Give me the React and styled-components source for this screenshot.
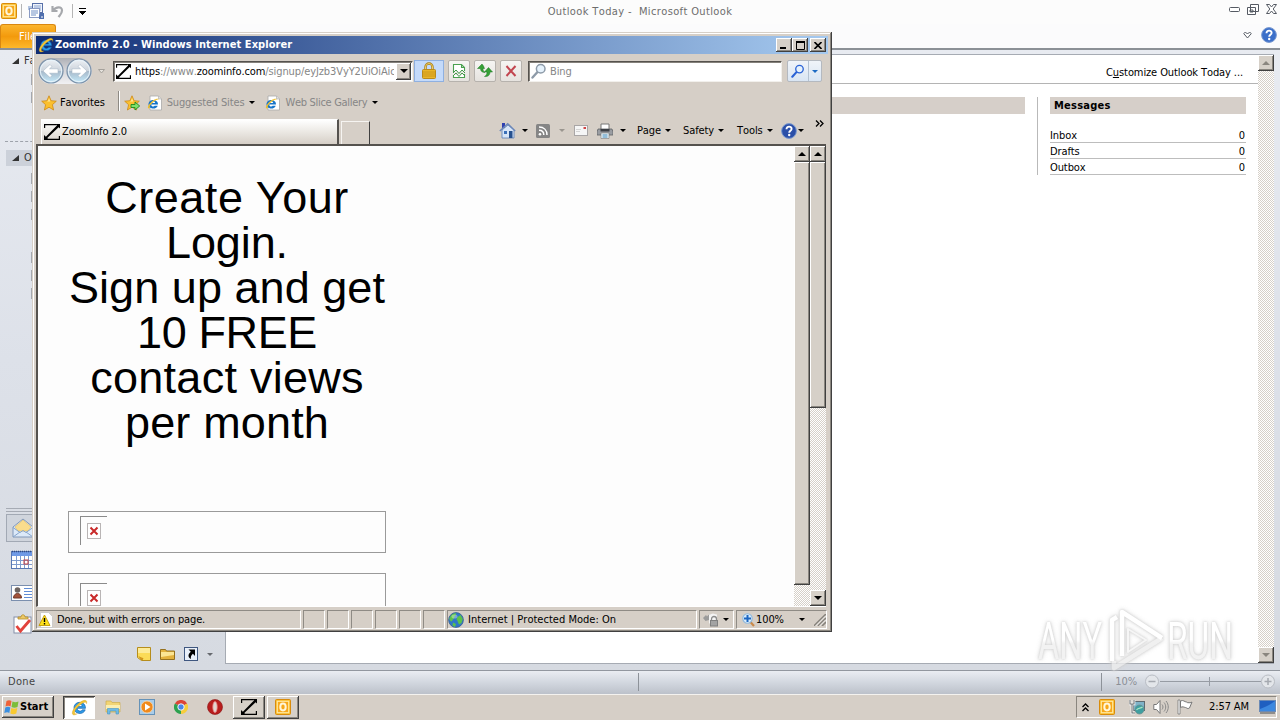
import styled, { createGlobalStyle, css } from "styled-components";

const GlobalStyle = createGlobalStyle`
  * {
    box-sizing: border-box;
  }
  body {
    margin: 0;
    overflow: hidden;
    font-family: "DejaVu Sans Condensed", "DejaVu Sans", Tahoma, sans-serif;
    font-size: 11px;
    color: #000;
    font-kerning: none;
  }
  svg {
    display: block;
    flex: none;
  }
`

const raised = css`
  background: #d6d0c8;
  box-shadow: inset -1px -1px #404040, inset 1px 1px #fff, inset -2px -2px #8a867f;
`
const hatch = css`
  background: repeating-conic-gradient(#d6d0c8 0 25%, #fff 0 50%) 0 0 / 2px 2px;
`

const Label = styled.span`
  white-space: pre;
  line-height: 14px;
  letter-spacing: ${props => props.$ls ?? -0.1}px;
  color: ${props => props.$color || "#000"};
  font-weight: ${props => props.$bold ? 700 : 400};
  margin-left: ${props => props.$ml || 0}px;
`

const Spacer = styled.div`
  flex: ${props => props.$w ? "none" : 1};
  width: ${props => props.$w || 0}px;
`

/* ---------- icons ---------- */

const Caret = ({ color = "#000", w = 6 }) => (
  <svg width={w} height={Math.ceil(w / 2)} viewBox="0 0 6 3">
    <path d="M0 0h6L3 3z" fill={color} />
  </svg>
)

const IeIcon = ({ size = 16 }) => (
  <svg width={size} height={size} viewBox="0 0 16 16">
    <path d="M13.6 8.8H5.8c.2 3 4 3.300 4.800 1.400h2.800C11.700 15.400 2.800 14.600 2.800 8.300 2.800 1.500 13.900 1.200 13.600 8.800zM5.900 7h4.700C10.300 4.200 6.300 4.200 5.900 7z" fill="#2f9be8" stroke="#0d5da8" strokeWidth=".6" />
    <path d="M14.600 4.500C15.800.6 12.500.3 8.500 3.100 3.800 6.400.2 12.200 1.500 14.300c.7 1.200 2.700.6 4.300-.4-3.800 1-3-2.900 1.200-7 3.500-3.400 7.700-5.600 7.600-2.400z" fill="#f3c637" stroke="#c99312" strokeWidth=".3" />
  </svg>
)

const IePage = () => (
  <svg width="16" height="16" viewBox="0 0 16 16">
    <path d="M3 1h8.500l3 3v11H3z" fill="#fff" stroke="#a9a9a9" strokeWidth=".8" />
    <path d="M11.500 1v3h3" fill="#ddd" stroke="#a9a9a9" strokeWidth=".6" />
    <path d="M11 9.500H4.200c.1 2.300 2.700 2.500 3.500 1.200h3C9.500 15 1.500 14.300 1.500 9.200 1.500 3.500 11.300 3.300 11 9.500zM4.300 7.900h3.900c-.3-2.200-3.600-2.200-3.900 0z" fill="#1674c9" />
    <path d="M11.500 5C12 3 9 3.500 6.500 5.200 3 7.500.3 11.500 1 13c.5.900 2 .3 3-.4-2.300.5-1.500-2 1.300-4.700C8 5.400 11.500 3.500 11.500 5z" fill="#edbf2f" />
  </svg>
)

const ZLogo = ({ size = 16 }) => (
  <svg width={size} height={size} viewBox="0 0 16 16">
    <path d="M0 0h12v1.300H1.200V4H0zM16 16H4v-1.300h10.800V12H16z" fill="#000" />
    <path d="M11.500 0H16v4.500l-1.400-1.300L3.300 14 5 16H0v-5l1.900 1.700L12.900 1.600z" fill="#000" />
  </svg>
)

const OutlookIcon = ({ size = 16 }) => (
  <svg width={size} height={size} viewBox="0 0 16 16">
    <rect x=".5" y=".5" width="15" height="15" rx="1" fill="#f9b91e" stroke="#d98b0a" />
    <rect x="2.300" y="2.300" width="11.400" height="11.400" fill="#f7a81a" stroke="#ffe7a0" strokeWidth="1.200" />
    <ellipse cx="8" cy="8" rx="2.700" ry="3.400" fill="none" stroke="#fff6d8" strokeWidth="2" />
  </svg>
)

const SendReceiveIcon = () => (
  <svg width="16" height="16" viewBox="0 0 16 16">
    <rect x="4.500" y=".5" width="10" height="9" fill="#eef3fb" stroke="#5870a8" />
    <path d="M6 3h7M6 5h7M6 7h7" stroke="#8ba3d0" />
    <rect x="1.500" y="5.500" width="10" height="9" fill="#fff" stroke="#8a9bc4" />
    <path d="M3 8h7M3 10h7M3 12h5M0 4h4M0 6h2" stroke="#6f8fc5" />
    <path d="M12 10h4v6h-5v-3z" fill="#4f6fae" />
    <path d="M13 14h2" stroke="#fff" />
  </svg>
)

const UndoIcon = () => (
  <svg width="13" height="13" viewBox="0 0 13 13">
    <path d="M1.500 1v5h5M2 5.500C5 1.500 11 1 11 5.500c0 3-2 4.500-3.500 6.500" fill="none" stroke="#a6a8ac" strokeWidth="2.200" />
  </svg>
)

const NavArrow = ({ flip }) => (
  <svg width="26" height="26" viewBox="0 0 26 26">
    <defs>
      <linearGradient id={flip ? "navB" : "navA"} x1="0" y1="0" x2="0" y2="1">
        <stop offset="0" stopColor="#eef1f5" />
        <stop offset=".48" stopColor="#cdd4dc" />
        <stop offset=".52" stopColor="#a8bacb" />
        <stop offset="1" stopColor="#c5ebfb" />
      </linearGradient>
    </defs>
    <circle cx="13" cy="13" r="12" fill={flip ? "url(#navB)" : "url(#navA)"} stroke="#7c92aa" strokeWidth="1.200" />
    <circle cx="13" cy="13" r="10.700" fill="none" stroke="#e8f4fb" strokeWidth="1" />
    <path
      d="M5 13l7-6.500 2 2-2.500 2.300H20v4.400h-8.500l2.500 2.300-2 2z"
      transform={flip ? "translate(26 0) scale(-1 1)" : undefined}
      fill="#fff"
      stroke="#9fb0c0"
      strokeWidth=".5"
    />
  </svg>
)

const Star = ({ add }) => (
  <svg width="16" height="16" viewBox="0 0 16 16">
    <path d="M8 .8l2.100 4.900 5.200.5-3.900 3.500 1.200 5.300L8 12.200 3.400 15l1.200-5.300L.7 6.200l5.200-.5z" fill="#fbc02f" stroke="#cf8a17" strokeWidth=".8" />
    <path d="M8 3l1.200 3.500H5.500L7 6z" fill="#ffe99a" />
    {add && <path d="M7 9.500h4V7l4.700 4-4.700 4v-2.500H7z" fill="#7fe06a" stroke="#1d8a1f" strokeWidth=".9" />}
  </svg>
)

const LockIcon = () => (
  <svg width="16" height="18" viewBox="0 0 16 18">
    <path d="M4.500 9V5a3.500 3.500 0 0 1 7 0v4" fill="none" stroke="#a67c17" strokeWidth="2.400" />
    <path d="M4.500 9V5a3.500 3.500 0 0 1 7 0v4" fill="none" stroke="#f0cf62" strokeWidth="1" />
    <rect x="1.500" y="7.500" width="13" height="9" rx="1" fill="#eab528" stroke="#b98a1c" />
    <path d="M2 10h12M2 12h12M2 14h12" stroke="#c48f17" strokeWidth=".8" />
  </svg>
)

const CompatIcon = () => (
  <svg width="14" height="16" viewBox="0 0 14 16">
    <path d="M1.500 9V1.500h8l3 3V8M1.500 12v2.500h11V11M9.500 1.500v3h3" fill="#fff" stroke="#4aa050" strokeWidth="1.100" />
    <path d="M1 10l3-3 3 3.500L10 7l3 3M1 13l3-3 3 3.500 3-3.500 3 3" fill="none" stroke="#3f9746" />
  </svg>
)

const RefreshIcon = () => (
  <svg width="16" height="14" viewBox="0 0 16 14">
    <path d="M5 0L.5 4.500h3C3.500 7 5 8.500 8 8.500 6.500 7.500 6 6.500 6 4.500h1.500L6.500 2z" fill="#35a136" stroke="#1b7420" strokeWidth=".5" />
    <path d="M11.500 3.500L7.500 8H10c0 2-.8 3.500-2.500 4.500C11 13 13 11 13 8h2.500z" fill="#35a136" stroke="#1b7420" strokeWidth=".5" />
  </svg>
)

const StopIcon = () => (
  <svg width="12" height="12" viewBox="0 0 12 12">
    <path d="M1.500 1l9 10M10.500 1l-9 10" stroke="#c24650" strokeWidth="2" />
  </svg>
)

const Magnifier = ({ color = "#8d9aa8", size = 16 }) => (
  <svg width={size} height={size} viewBox="0 0 16 16">
    <path d="M1.500 14.500l5-5.500" stroke={color} strokeWidth="2.400" strokeLinecap="round" />
    <circle cx="9.700" cy="5.800" r="4.300" fill="#e6f2fc" stroke={color} strokeWidth="1.500" />
  </svg>
)

const HomeIcon = () => (
  <svg width="17" height="17" viewBox="0 0 17 17">
    <rect x="3" y="1" width="3" height="5" fill="#2d3fb0" />
    <path d="M3 8l6-5 6 5v8H3z" fill="#d7e5f7" stroke="#5c7fb6" strokeWidth=".8" />
    <path d="M.8 9L8.700 1.800 16.200 9" fill="none" stroke="#6b86b8" strokeWidth="1.400" />
    <rect x="5" y="9" width="3" height="3" fill="#3b6fb8" />
    <rect x="10" y="9" width="3.500" height="7" fill="#27518f" />
  </svg>
)

const FeedIcon = () => (
  <svg width="14" height="14" viewBox="0 0 14 14">
    <rect width="14" height="14" rx="1.500" fill="#858585" />
    <circle cx="4" cy="10.200" r="1.300" fill="#fff" />
    <path d="M3 6.300c3 0 4.800 1.800 4.800 4.800M3 3c4.800 0 8 3.200 8 8" fill="none" stroke="#fff" strokeWidth="1.500" />
  </svg>
)

const MailIcon = () => (
  <svg width="14" height="11" viewBox="0 0 14 11">
    <rect x=".5" y=".5" width="13" height="10" fill="#f6f6f6" stroke="#a9a6a6" />
    <path d="M2 4.500h5M2 6.500h4" stroke="#d5d5d5" />
    <rect x="9.500" y="2" width="2.500" height="2" fill="#cf4545" />
  </svg>
)

const PrinterIcon = () => (
  <svg width="16" height="16" viewBox="0 0 16 16">
    <path d="M4 6V1h8v5" fill="#fff" stroke="#777" />
    <path d="M1 6h14l1 3v3H0V9z" fill="#9a9da2" stroke="#5f6266" strokeWidth=".8" />
    <rect x="3.500" y="6" width="9" height="2.500" fill="#3c3f45" />
    <path d="M4 10h8v5.500H4z" fill="#eaf5fb" stroke="#777" strokeWidth=".6" />
    <path d="M5.500 12h5M5.500 14h5" stroke="#3f86b5" />
  </svg>
)

const HelpIcon = ({ size = 16, fill = "#3b6fc9" }) => (
  <svg width={size} height={size} viewBox="0 0 16 16">
    <circle cx="8" cy="8" r="7.400" fill={fill} stroke="#7b9ad0" strokeWidth="1" />
    <path d="M5.500 6.200C5.500 2.600 10.800 3 10.600 6 10.500 7.800 8.200 7.900 8.200 9.800" fill="none" stroke="#fff" strokeWidth="1.900" />
    <circle cx="8.200" cy="12" r="1.200" fill="#fff" />
  </svg>
)

const WarningIcon = () => (
  <svg width="15" height="16" viewBox="0 0 15 16">
    <path d="M2.500.5h8l4 4v11h-12z" fill="#fff" stroke="#c5c5c5" strokeWidth=".8" />
    <path d="M6.500 3L1 13.500h11z" fill="#ffe11c" stroke="#c19a06" strokeWidth=".9" />
    <path d="M6.500 6v4M6.500 11v1.500" stroke="#000" strokeWidth="1.400" />
  </svg>
)

const GlobeIcon = () => (
  <svg width="16" height="16" viewBox="0 0 16 16">
    <circle cx="8" cy="8" r="7.400" fill="#2f77c9" stroke="#3b5f8f" strokeWidth=".8" />
    <path d="M3 3.500c2-2 4-2.500 5-2 1 1.500-1.500 2-1.500 3.500S4.500 7.500 4 9 1.200 8 1.300 6.500zM9.500 5l3-2 2.300 4-1.300 4-2.500 1.500L9.500 9l-1-2zM5 10.500l3 1.500-1 3-2.500-1.500z" fill="#5cc24b" />
    <ellipse cx="6.500" cy="4.500" rx="3" ry="2" fill="#fff" opacity=".35" />
  </svg>
)

const ShieldLock = () => (
  <svg width="16" height="14" viewBox="0 0 16 14">
    <path d="M0 5l3-3 1 1.500C6 1 9 .5 10 1.500L6 7 2.500 8z" fill="#9b9b9b" />
    <path d="M6 1.500c2 0 3-1 4-1s2 1 4 1V10l-4 3.500L6 10z" fill="#f4f4f4" />
    <path d="M8.500 7.500V6a2.500 2.500 0 0 1 5 0v1.500" fill="none" stroke="#8c8c8c" strokeWidth="1.300" />
    <rect x="7.500" y="7.500" width="7" height="5.500" fill="#a3a3a3" stroke="#7f7f7f" />
  </svg>
)

const ZoomIcon = () => (
  <svg width="13" height="14" viewBox="0 0 13 14">
    <path d="M8 8.500l4 4.500" stroke="#c98a4b" strokeWidth="2.200" />
    <circle cx="5.500" cy="5.500" r="4.700" fill="#d9ecfb" stroke="#8fb9de" strokeWidth="1.100" />
    <path d="M5.500 2v7M2 5.500h7" stroke="#1c66c2" strokeWidth="2" />
  </svg>
)

const GripIcon = () => (
  <svg width="12" height="12" viewBox="0 0 12 12">
    <path d="M0 12L12 0M4 12l8-8M8 12l4-4" stroke="#87837c" strokeWidth="1.600" />
    <path d="M1.500 12L12 1.500M5.500 12L12 5.500" stroke="#fff" strokeWidth=".8" />
  </svg>
)

const BrokenImage = () => (
  <svg width="14" height="16" viewBox="0 0 14 16">
    <rect x=".5" y=".5" width="13" height="15" fill="#fff" stroke="#b9b5b5" />
    <path d="M3.500 4.500l7 7M10.500 4.500l-7 7" stroke="#c92a2a" strokeWidth="2" />
  </svg>
)

const MailModule = () => (
  <svg width="22" height="20" viewBox="0 0 22 20">
    <path d="M1 9l10-8 10 8v10H1z" fill="#dce9f8" stroke="#8097b8" />
    <path d="M3 9l8-7 8 7-3 4H6z" fill="#f9dc8d" stroke="#e1b95c" strokeWidth=".6" />
    <path d="M1 9.500l7 5 3-2 3 2 7-5M1 19l7-5M21 19l-7-5" fill="none" stroke="#86a5cc" />
  </svg>
)

const CalendarModule = () => (
  <svg width="22" height="20" viewBox="0 0 22 20">
    <rect x=".5" y="1.500" width="24" height="17" fill="#fff" stroke="#5877b3" />
    <path d="M1 2h24v4H1z" fill="#6f9ae6" />
    <path d="M1 1.500h24" stroke="#2e4a84" strokeWidth="1.600" strokeDasharray="1 1" />
    <path d="M1 10.500h24M1 14.500h24M5.500 6v12M9.500 6v12M13.500 6v12M17.500 6v12" stroke="#7e9bce" />
    <rect x="13" y="10" width="4" height="4" fill="none" stroke="#c84242" />
  </svg>
)

const ContactModule = () => (
  <svg width="22" height="18" viewBox="0 0 22 18">
    <rect x=".5" y="1.500" width="24" height="15" fill="#fff" stroke="#7b8fae" />
    <circle cx="6.500" cy="6" r="2.800" fill="#6d6461" />
    <path d="M2.500 14c0-6 8-6 8 0z" fill="#a3533a" stroke="#6f392a" />
    <path d="M13 4.500h9M13 7.500h9M13 10.500h9M13 13.500h9" stroke="#5f8cd6" />
  </svg>
)

const TaskModule = () => (
  <svg width="20" height="20" viewBox="0 0 20 20">
    <rect x="1" y="3" width="17" height="16" fill="#fff" stroke="#8590a8" />
    <path d="M5 5V3h3c0-3 4-3 4 0h3v2z" fill="#ecc865" stroke="#b48c28" strokeWidth=".8" />
    <path d="M3.500 12l4 5L17 6" fill="none" stroke="#e2433c" strokeWidth="2.800" />
  </svg>
)

const NoteIcon = () => (
  <svg width="14" height="14" viewBox="0 0 14 14">
    <path d="M.5.500h13v13h-9l-4-3z" fill="#fbdb58" stroke="#b68d1c" />
    <path d="M1 1h12v5H1z" fill="#fdeb98" />
    <path d="M2 9.500l3 3.500 1-2" fill="#d99b1a" stroke="#c98f1c" />
  </svg>
)

const FolderIcon = () => (
  <svg width="15" height="12" viewBox="0 0 15 12">
    <path d="M.5 11.500v-10h5l1 1.500h8v8.500z" fill="#e3b23e" stroke="#94701f" />
    <path d="M1 9V4h13v3z" fill="#fbe594" />
  </svg>
)

const ShortcutIcon = () => (
  <svg width="14" height="14" viewBox="0 0 14 14">
    <rect x=".5" y=".5" width="13" height="13" fill="#e9f0fa" stroke="#3f5780" />
    <path d="M4.500 2.500H11V9L8.900 6.800C7 8.300 6.500 10 7 12 3.500 10.500 4 7 6.800 4.800z" fill="#000" />
  </svg>
)

const WindowsFlag = () => (
  <svg width="16" height="16" viewBox="0 0 16 16">
    <path d="M2.500 2C4.500.8 6 1 7.500 2L6.500 7.500C5 6.500 3.500 6.500 1.500 7.500z" fill="#ef6238" />
    <path d="M8.500 2.500c2 1 3.500 1 6 0l-1 5.500c-2 1-4 1-6 0z" fill="#7cbd3a" />
    <path d="M1.300 8.500c2-1 3.500-1 5 0l-1 5.500C4 13 2.500 13 .3 14z" fill="#3b8fe0" />
    <path d="M7.300 9c2 1 3.800 1 6 0l-1 5.500c-2 1-4 1-6 0z" fill="#f9c92e" />
  </svg>
)

const ExplorerIcon = () => (
  <svg width="16" height="16" viewBox="0 0 16 16">
    <path d="M1 2h5l1 1.500h8V13H1z" fill="#f2d575" stroke="#cfae4b" strokeWidth=".7" />
    <path d="M1 6h14v4H1z" fill="#fbeeb0" />
    <path d="M2.500 15V9.500h11V15H11v-3H5v3z" fill="#6fbbe6" stroke="#4593c4" strokeWidth=".6" />
  </svg>
)

const MediaIcon = () => (
  <svg width="16" height="16" viewBox="0 0 16 16">
    <rect x=".5" y=".5" width="15" height="15" fill="#a9cdea" stroke="#6592b8" />
    <circle cx="8" cy="8" r="6" fill="#f08a1d" stroke="#fbd9ae" strokeWidth=".8" />
    <path d="M6 4.500v7L11.500 8z" fill="#fff" />
  </svg>
)

const ChromeIcon = () => (
  <svg width="14" height="14" viewBox="0 0 14 14">
    <path d="M7 7L.9 3.500A7 7 0 0 1 13.100 3.500z" fill="#dc4437" />
    <path d="M7 7l6.100-3.500A7 7 0 0 1 7 14z" fill="#f6cd3c" />
    <path d="M7 7v7A7 7 0 0 1 .9 3.500z" fill="#2da14f" />
    <circle cx="7" cy="7" r="3.200" fill="#4a86e8" stroke="#fff" strokeWidth=".9" />
  </svg>
)

const OperaIcon = () => (
  <svg width="16" height="16" viewBox="0 0 16 16">
    <circle cx="8" cy="8" r="7.500" fill="#b81d1d" stroke="#8a1313" strokeWidth=".6" />
    <ellipse cx="8" cy="8" rx="2.200" ry="5.500" fill="#e2d6d0" stroke="#e87d7d" strokeWidth=".8" />
  </svg>
)

const NetworkIcon = () => (
  <svg width="16" height="16" viewBox="0 0 16 16">
    <rect x="4.500" y="2.500" width="11" height="9" fill="#7fb3c8" stroke="#5f6a70" />
    <path d="M1 1v4h4V1M3 5v9h3" fill="none" stroke="#fff" strokeWidth="2.600" />
    <path d="M1 1v4h4V1M3 5v9h3" fill="none" stroke="#6f7274" strokeWidth="1.100" />
    <circle cx="10.500" cy="10.500" r="4.500" fill="#3f9fa0" stroke="#6b8f90" strokeWidth=".8" />
    <path d="M7.500 11c2-3 4-1 6-3" fill="none" stroke="#a8e6c5" strokeWidth="1.200" />
  </svg>
)

const SpeakerIcon = () => (
  <svg width="16" height="16" viewBox="0 0 16 16">
    <path d="M.8 5.500h2.700l3.500-4v13l-3.500-4H.8z" fill="#fff" stroke="#777" />
    <path d="M9 5.500c1.300 1.500 1.300 3.500 0 5M11 3.500c2.300 2.500 2.300 6.500 0 9M13 2c3 3.500 3 8.500 0 12" fill="none" stroke="#888" />
  </svg>
)

const FlagIcon = () => (
  <svg width="16" height="16" viewBox="0 0 16 16">
    <path d="M1 1h2v14H1z" fill="#fff" stroke="#777" strokeWidth=".8" />
    <path d="M3.500 2c3-1.500 4 1 6 1 0 1 5 1 5.500 0l-2.500 6c-2 1.500-3-.5-4-.5s-3-1.500-5 0z" fill="#fff" stroke="#777" />
  </svg>
)

const DesktopIcon = () => (
  <svg width="17" height="14" viewBox="0 0 17 14">
    <rect x=".5" y=".5" width="16" height="11" fill="#1f5fc0" stroke="#6a89b5" />
    <path d="M1 9C6 7 11 5 16 1v10H1z" fill="#3c88df" />
    <path d="M1 13h15" stroke="#777" strokeWidth="1.500" />
  </svg>
)

/* ---------- outlook window ---------- */

const Desktop = styled.div`
  width: 1280px;
  height: 720px;
  display: flex;
  flex-direction: column;
  position: relative;
  overflow: hidden;
  background: #fcfcfc;
`
const OutlookTitle = styled.header`
  height: 24px;
  display: grid;
  grid-template-columns: 1fr auto 1fr;
  align-items: center;
  background: #fcfcfc;
`
const QuickAccess = styled.div`
  display: flex;
  align-items: center;
  padding-left: 1px;
  margin-top: -2px;
`
const QuickDivider = styled.div`
  width: 1px;
  height: 14px;
  background: #b5b5b5;
  margin: 0 6px 0 4px;
`
const WindowControls = styled.div`
  display: flex;
  justify-content: flex-end;
  align-items: center;
  gap: 7px;
  padding: 0 3px 6px 0;
`
const RibbonRow = styled.div`
  height: 26px;
  display: flex;
  justify-content: space-between;
  background: #fbfbfc;
  border-bottom: 2px solid #8b9096;
`
const FileTab = styled.div`
  width: 56px;
  height: 24px;
  padding: 5px 0 0 18px;
  border: 1px solid #d98710;
  border-bottom: 0;
  border-radius: 3px 3px 0 0;
  background: linear-gradient(#fbb52e, #f39a0c 50%, #fdb82a);
`
const RibbonRight = styled.div`
  display: flex;
  align-items: center;
  gap: 9px;
  padding-right: 3px;
  margin-top: -2px;
`
const OutlookBody = styled.div`
  height: 620px;
  display: flex;
  padding: 4px 6px 6px 0;
  background: linear-gradient(#e8ebf1, #dde1e9 50%, #d6dae1);
`
const NavPane = styled.aside`
  width: 225px;
  display: flex;
  flex-direction: column;

  > * {
    flex: none;
  }
`
const FolderHead = styled.div`
  height: 16px;
  margin: ${props => props.$active ? 0 : -1}px 0 0 6px;
  padding-left: 6px;
  display: flex;
  align-items: center;
  background: ${props => props.$active ? "#ccd1da" : "transparent"};
`
const FolderMarks = styled.div`
  display: flex;
  flex-direction: column;
  gap: 7px;
  margin-left: 31px;
  height: ${props => props.$h}px;
  padding-top: ${props => props.$pt}px;

  i {
    width: 1px;
    height: 11px;
    background: #a4a8af;
  }
`
const Dashes = styled.div`
  border-top: 1px dashed #9ea3ab;
  margin: 0 0 8px 5px;
`
const Modules = styled.div`
  display: flex;
  flex-direction: column;
  border-top: 1px solid #a6abb4;
  margin-left: 6px;
`
const ModuleGrip = styled.div`
  height: 3px;
  margin-bottom: 2px;
  border-bottom: 1px solid #a6abb4;
`
const Module = styled.div`
  height: ${props => props.$h || 32}px;
  padding-left: ${props => props.$pl ?? 5}px;
  display: flex;
  align-items: center;
  border: 1px solid ${props => props.$active ? "#a2a9b4" : "transparent"};
  background: ${props => props.$active ? "#d0d5dd" : "transparent"};
`
const ModuleBar = styled.div`
  display: flex;
  align-items: center;
  gap: 9px;
  padding-left: 137px;
  height: 28px;
`
const Reading = styled.main`
  flex: 1;
  display: flex;
  border: solid #a6abb3;
  border-width: 1px 0 1px 1px;
  background: #fff;
`
const TodayPage = styled.div`
  flex: 1;
`
const CustomizeBar = styled.div`
  height: 29px;
  padding: 7px 15px 0 0;
  display: flex;
  justify-content: flex-end;
  align-items: center;
  border-bottom: 1px solid #b4b4b4;
  u {
    text-underline-offset: 1px;
  }
`
const TodayColumns = styled.div`
  display: flex;
  padding: 13px 12px 0 0;
`
const TaskColumn = styled.div`
  flex: 1;
  height: 17px;
  margin-right: 12px;
  background: #d6cfc9;
`
const MessageColumn = styled.section`
  width: 209px;
  height: 78px;
  padding-left: 12px;
  border-left: 1px solid #b9b9b9;
`
const MessageHead = styled.h2`
  margin: 0 0 13px;
  height: 17px;
  line-height: 17px;
  padding-left: 4px;
  font-size: 11px;
  letter-spacing: 0.25px;
  background: #d6cfc9;
`
const MessageRow = styled.div`
  height: 16px;
  padding: 2px 1px 0 0;
  display: flex;
  align-items: center;
  justify-content: space-between;
  border-bottom: 1px solid #bdbdbd;
`
const OutlookStatus = styled.footer`
  height: 24px;
  display: flex;
  align-items: center;
  padding: 0 4px 2px 8px;
  border-top: 1px solid #92979f;
  background: linear-gradient(#eaedf2, #d2d7df 50%, #bcc1ca);
`
const StatusTick = styled.div`
  width: 1px;
  height: 18px;
  background: #8d9299;
`

/* ---------- internet explorer window ---------- */

const IeWindow = styled.div`
  position: absolute;
  left: 32px;
  top: 32px;
  width: 800px;
  height: 600px;
  padding: 4px 4px 2px 4px;
  display: flex;
  flex-direction: column;
  background: #d6cfc7;
  box-shadow: inset -1px -1px #404040, inset 1px 1px #d6cfc7, inset -2px -2px #8a867f, inset 2px 2px #fff;
`
const IeTitle = styled.div`
  height: 18px;
  display: flex;
  align-items: center;
  padding: 0 2px 0 2px;
  background: linear-gradient(90deg, #0f2c74, #a6caf0);
`
const TitleButton = styled.div`
  ${raised}
  width: 16px;
  height: 14px;
  margin-left: ${props => props.$gap || 0}px;
  display: flex;
  align-items: center;
  justify-content: center;
`
const AddressRow = styled.div`
  height: 34px;
  padding-left: 2px;
  display: flex;
  align-items: center;
`
const NavButtons = styled.div`
  display: flex;
  gap: 2px;
  border-radius: 14px;
  background: linear-gradient(#aeb0b6, #d4d4d8 45%, #f1f1f3);
`
const AddressBox = styled.div`
  width: ${props => props.$w}px;
  height: 21px;
  padding: 0 1px 0 2px;
  display: flex;
  align-items: center;
  background: #fff;
  border: 1px solid;
  border-color: #55524e #f2f0ec #f2f0ec #55524e;
  box-shadow: inset 1px 1px #85817b;
`
const UrlText = styled.div`
  flex: 1;
  margin: 0 2px 0 3px;
  overflow: hidden;
  white-space: nowrap;
  letter-spacing: -0.1px;
  color: #868686;
  b {
    font-weight: 400;
    color: #000;
  }
`
const DropButton = styled.div`
  ${raised}
  width: 15px;
  height: 17px;
  display: flex;
  align-items: center;
  justify-content: center;
`
const ToolButton = styled.div`
  width: ${props => props.$w || 22}px;
  height: 22px;
  margin-left: ${props => props.$ml || 4}px;
  display: flex;
  align-items: center;
  justify-content: center;
  border: 1px solid ${props => props.$active ? "#8fb0e0" : "#b6b2ad"};
  border-radius: ${props => props.$active ? 0 : 2}px;
  background: ${props => props.$active ? "#c4dafa" : "linear-gradient(#f6f5f3, #e6e3df)"};
`
const SearchButton = styled.div`
  display: flex;
  height: 22px;
  margin-left: 5px;
  border: 1px solid #b4b9c0;
  border-radius: 2px;
  background: linear-gradient(#f0f4f9, #d9e5f3);

  div {
    width: 20px;
    display: flex;
    align-items: center;
    justify-content: center;
  }
  div + div {
    width: 13px;
    border-left: 1px solid #b4c2d2;
  }
`
const FavoritesRow = styled.div`
  height: 29px;
  display: flex;
  align-items: center;
  padding-left: 5px;
`
const FavDivider = styled.div`
  width: 2px;
  height: 20px;
  margin: -4px 4px 0 13px;
  border-left: 1px solid #8e8a84;
  border-right: 1px solid #fff;
`
const TabRow = styled.div`
  height: 27px;
  display: flex;
  align-items: flex-end;
  padding-left: 5px;
`
const Tab = styled.div`
  width: 298px;
  height: 25px;
  padding-left: 2px;
  display: flex;
  align-items: center;
  gap: 2px;
  border-right: 2px solid #55524e;
  border-top: 1px solid #fff;
  border-left: 1px solid #fff;
  background: linear-gradient(#fff, #ebe8e3 50%, #d6cfc7);
`
const NewTab = styled.div`
  width: 29px;
  height: 23px;
  margin-left: 2px;
  border-right: 1px solid #404040;
  border-top: 1px solid #f6f4f1;
  border-left: 1px solid #f6f4f1;
`
const CommandBar = styled.div`
  flex: 1;
  height: 27px;
  display: flex;
  align-items: center;
  padding: 0 0 0 129px;
`
const Chevrons = styled.div`
  align-self: flex-start;
  margin: 3px 0 0 11px;
`
const Viewport = styled.div`
  height: 463px;
  display: flex;
  margin-right: 2px;
  border: solid #55524e;
  border-width: 2px 0 0 2px;
  border-bottom: 1px solid #fff;
  background: #fdfdfd;
`
const PageArea = styled.div`
  flex: 1;
  overflow: hidden;
  padding: 29px 0 0 30px;
`
const SignupForm = styled.div`
  width: 318px;
`
const Heading = styled.h1`
  margin: 0 -10px 66px;
  font: 400 45px/45px "Liberation Sans", Arial, sans-serif;
  text-align: center;
  white-space: pre;
`
const HeadingLine = styled.span`
  letter-spacing: ${props => props.$ls}px;
`
const Field = styled.div`
  height: 42px;
  margin-bottom: 20px;
  padding: ${props => props.$pt || 4}px 0 0 11px;
  border: 1px solid #9a9a9a;
`
const FieldImage = styled.div`
  width: 27px;
  height: 29px;
  padding: 6px 0 0 6px;
  border: solid #8b8b8b;
  border-width: 1px 0 0 1px;
`
const Scroll = styled.div`
  ${hatch}
  width: 16px;
  display: flex;
  flex-direction: column;
`
const ScrollButton = styled.div`
  ${raised}
  height: 16px;
  display: flex;
  align-items: center;
  justify-content: center;
  svg {
    transform: ${props => props.$up ? "rotate(180deg)" : "none"};
  }
`
const ScrollThumb = styled.div`
  ${raised}
  height: ${props => props.$h}px;
`
const IeStatus = styled.div`
  height: 23px;
  padding-top: 3px;
  display: flex;
  gap: 2px;
`
const StatusCell = styled.div`
  flex: none;
  width: ${props => props.$w}px;
  height: 19px;
  padding-left: ${props => props.$pl || 0}px;
  display: flex;
  align-items: center;
  border: 1px solid;
  border-color: #8f8b85 #fff #fff #8f8b85;
`

/* ---------- taskbar ---------- */

const Taskbar = styled.div`
  flex: 1;
  display: flex;
  align-items: center;
  padding: 0 3px 1px 2px;
  background: #d6cfc7;
  border-top: 1px solid #f4f2ef;
`
const StartButton = styled.div`
  ${raised}
  width: 52px;
  height: 22px;
  display: flex;
  align-items: center;
  padding-left: 2px;
`
const TaskButton = styled.div`
  width: ${props => props.$w || 32}px;
  height: 23px;
  display: flex;
  align-items: center;
  justify-content: center;
  margin-left: ${props => props.$ml || 0}px;
  ${props => props.$kind === "raised" && raised}
  ${props => props.$kind === "active" && css`
    background: #fff;
    box-shadow: inset 1px 1px #404040, inset -1px -1px #fff, inset 2px 2px #8a867f;
  `}
`
const Tray = styled.div`
  width: 201px;
  height: 22px;
  display: flex;
  align-items: center;
  padding-left: 5px;
  border: 1px solid;
  border-color: #8a867f #fff #fff #8a867f;
`
const Watermark = styled.svg`
  position: absolute;
  left: 1030px;
  top: 600px;
  filter: drop-shadow(0 0 1px #c4c4c4) drop-shadow(0 0 2px #d4d4d4);
  opacity: 0.8;
`

const folders = [["Inbox", 0], ["Drafts", 0], ["Outbox", 0]]

const headingLines = [
  ["Create Your\n", 0.55],
  ["Login.\n", -0.1],
  ["Sign up and get\n", 0.05],
  ["10 FREE\n", -0.4],
  ["contact views\n", 0.25],
  ["per month", 0.15],
]

const Outlook = () => (
  <>
    <OutlookTitle>
      <QuickAccess>
        <OutlookIcon />
        <QuickDivider />
        <SendReceiveIcon />
        <Spacer $w={7} />
        <UndoIcon />
        <Spacer $w={4} />
        <QuickDivider />
        <svg width="7" height="7" viewBox="0 0 7 7" shapeRendering="crispEdges">
          <path d="M0 0h7v1H0zM0 3h7L3.500 7z" fill="#000" />
        </svg>
      </QuickAccess>
      <Label $color="#6d6d6d" $ls={0.37}>Outlook Today -  Microsoft Outlook</Label>
      <WindowControls>
        <svg width="11" height="5" viewBox="0 0 11 5"><rect x=".5" y=".5" width="10" height="4" rx="1" fill="#fff" stroke="#555a63" /></svg>
        <svg width="12" height="11" viewBox="0 0 12 11">
          <path d="M3.500.5h8v7h-8zM.5 3.500h8v7h-8z" fill="#fff" stroke="#555a63" />
          <path d="M3 6h3v2H3z" fill="none" stroke="#555a63" />
        </svg>
        <svg width="11" height="10" viewBox="0 0 11 10">
          <path d="M.5.500h3l2 2.500 2-2.500h3L7.200 5l3.300 4.500h-3L5.500 7l-2 2.500h-3L3.800 5z" fill="#fff" stroke="#555a63" />
        </svg>
      </WindowControls>
    </OutlookTitle>
    <RibbonRow>
      <FileTab><Label $color="#fff">File</Label></FileTab>
      <RibbonRight>
        <svg width="9" height="7" viewBox="0 0 9 7">
          <path d="M.7 1.500C2-.2 3.500.5 4.500 2 5.500.5 7-.2 8.300 1.500L4.500 6z" fill="#fff" stroke="#555a63" />
        </svg>
        <HelpIcon />
      </RibbonRight>
    </RibbonRow>
    <OutlookBody>
      <NavPane>
        <FolderHead>
          <svg width="7" height="6" viewBox="0 0 7 6"><path d="M7 0v6H0z" fill="#333" /></svg>
          <Label $ml={5} $color="#333">Fa</Label>
        </FolderHead>
        <FolderMarks $h={72} $pt={5}><i /><i /></FolderMarks>
        <Dashes />
        <FolderHead $active>
          <svg width="7" height="6" viewBox="0 0 7 6"><path d="M7 0v6H0z" fill="#333" /></svg>
          <Label $ml={5} $color="#333">O</Label>
        </FolderHead>
        <FolderMarks $h={79} $pt={7}><i /><i /><i /></FolderMarks>
        <FolderMarks $h={263} $pt={7}><i /><i /><i /></FolderMarks>
        <Modules>
          <ModuleGrip />
          <Module $h={28} $active><MailModule /></Module>
          <Module $h={35} $pl={4}><CalendarModule /></Module>
          <Module $h={31} $pl={4}><ContactModule /></Module>
          <Module $h={32} $pl={6}><TaskModule /></Module>
        </Modules>
        <ModuleBar>
          <NoteIcon />
          <FolderIcon />
          <ShortcutIcon />
          <Caret color="#66696e" />
        </ModuleBar>
      </NavPane>
      <Reading>
        <TodayPage>
          <CustomizeBar>
            <Label>C<u>u</u>stomize Outlook Today ...</Label>
          </CustomizeBar>
          <TodayColumns>
            <TaskColumn />
            <MessageColumn>
              <MessageHead>Messages</MessageHead>
              {folders.map(([name, count]) => (
                <MessageRow key={name}>
                  <Label>{name}</Label>
                  <Label>{count}</Label>
                </MessageRow>
              ))}
            </MessageColumn>
          </TodayColumns>
        </TodayPage>
        <Scroll>
          <ScrollButton $up><Caret color="#8a867f" w={8} /></ScrollButton>
          <Spacer />
          <ScrollButton><Caret color="#8a867f" w={8} /></ScrollButton>
        </Scroll>
      </Reading>
    </OutlookBody>
    <OutlookStatus>
      <Label $color="#444" $ls={0.35}>Done</Label>
      <Spacer />
      <StatusTick />
      <Spacer $w={462} />
      <StatusTick />
      <Label $color="#8b8f96" $ml={13}>10%</Label>
      <Spacer $w={8} />
      <svg width="131" height="16" viewBox="0 0 131 16">
        <path d="M15 7.500h101" stroke="#979ca4" />
        <path d="M64.500 3v9" stroke="#979ca4" />
        <circle cx="7" cy="7.500" r="6.500" fill="#e3e6ea" stroke="#b9bdc4" />
        <path d="M3.500 7.500h7" stroke="#a5a9b0" strokeWidth="1.500" />
        <circle cx="123" cy="7.500" r="6.500" fill="#e3e6ea" stroke="#b9bdc4" />
        <path d="M119.500 7.500h7M123 4v7" stroke="#a5a9b0" strokeWidth="1.500" />
      </svg>
    </OutlookStatus>
  </>
)

const InternetExplorer = () => (
  <IeWindow>
    <IeTitle>
      <IeIcon />
      <Label $bold $color="#fff" $ml={1} $ls={0.07}>ZoomInfo 2.0 - Windows Internet Explorer</Label>
      <Spacer />
      <TitleButton>
        <svg width="8" height="8"><path d="M0 6h6v2H0z" fill="#000" /></svg>
      </TitleButton>
      <TitleButton>
        <svg width="9" height="9" viewBox="0 0 9 9"><path d="M.5 1h8v7.500h-8z" fill="none" stroke="#000" /><path d="M0 1h9" stroke="#000" strokeWidth="2" /></svg>
      </TitleButton>
      <TitleButton $gap={2}>
        <svg width="8" height="7" viewBox="0 0 8 7"><path d="M.5 0l7 7M7.500 0l-7 7" stroke="#000" strokeWidth="1.600" /></svg>
      </TitleButton>
    </IeTitle>
    <AddressRow>
      <NavButtons>
        <NavArrow />
        <NavArrow flip />
      </NavButtons>
      <Spacer $w={6} />
      <svg width="7" height="5" viewBox="0 0 7 5"><path d="M.5.500h6L3.500 4z" fill="#e6e3de" stroke="#a5a19b" /></svg>
      <Spacer $w={8} />
      <AddressBox $w={300}>
        <ZLogo size={15} />
        <Spacer $w={1} />
        <UrlText><b>https</b>://www.<b>zoominfo.com</b>/signup/eyJzb3VyY2UiOiAic</UrlText>
        <DropButton><Caret w={8} /></DropButton>
      </AddressBox>
      <ToolButton $w={30} $ml={1} $active><LockIcon /></ToolButton>
      <ToolButton><CompatIcon /></ToolButton>
      <ToolButton><RefreshIcon /></ToolButton>
      <ToolButton><StopIcon /></ToolButton>
      <Spacer $w={6} />
      <AddressBox $w={254}>
        <Magnifier />
        <UrlText>Bing</UrlText>
      </AddressBox>
      <SearchButton>
        <div><Magnifier color="#2a62d6" size={14} /></div>
        <div><Caret color="#1d6bc4" /></div>
      </SearchButton>
    </AddressRow>
    <FavoritesRow>
      <Star />
      <Label $ml={3}>Favorites</Label>
      <FavDivider />
      <Star add />
      <Spacer $w={7} />
      <IePage />
      <Label $color="#868686" $ml={4} $ls={-0.15}>Suggested Sites</Label>
      <Spacer $w={5} />
      <Caret />
      <Spacer $w={10} />
      <IePage />
      <Label $color="#868686" $ml={4} $ls={-0.3}>Web Slice Gallery</Label>
      <Spacer $w={5} />
      <Caret />
    </FavoritesRow>
    <TabRow>
      <Tab>
        <ZLogo />
        <Label>ZoomInfo 2.0</Label>
      </Tab>
      <NewTab />
      <CommandBar>
        <HomeIcon />
        <Spacer $w={6} />
        <Caret />
        <Spacer $w={8} />
        <FeedIcon />
        <Spacer $w={9} />
        <Caret color="#9a968f" />
        <Spacer $w={9} />
        <MailIcon />
        <Spacer $w={9} />
        <PrinterIcon />
        <Spacer $w={7} />
        <Caret />
        <Label $ml={11}>Page</Label>
        <Spacer $w={4} />
        <Caret />
        <Label $ml={12}>Safety</Label>
        <Spacer $w={4} />
        <Caret />
        <Label $ml={13}>Tools</Label>
        <Spacer $w={4} />
        <Caret />
        <Spacer $w={8} />
        <HelpIcon fill="#2b4fa8" />
        <Spacer $w={1} />
        <Caret />
        <Chevrons>
          <svg width="9" height="7" viewBox="0 0 9 7"><path d="M1 .5l3 3-3 3M5 .5l3 3-3 3" fill="none" stroke="#000" strokeWidth="1.300" /></svg>
        </Chevrons>
      </CommandBar>
    </TabRow>
    <Viewport>
      <PageArea>
        <SignupForm>
          <Heading>
            {headingLines.map(([text, ls]) => (
              <HeadingLine key={text} $ls={ls}>{text}</HeadingLine>
            ))}
          </Heading>
          <Field><FieldImage><BrokenImage /></FieldImage></Field>
          <Field $pt={9}><FieldImage><BrokenImage /></FieldImage></Field>
        </SignupForm>
      </PageArea>
      <Scroll>
        <ScrollButton $up><Caret w={8} /></ScrollButton>
        <ScrollThumb $h={423} />
      </Scroll>
      <Scroll>
        <ScrollButton $up><Caret w={8} /></ScrollButton>
        <ScrollThumb $h={246} />
        <Spacer />
        <ScrollButton><Caret w={8} /></ScrollButton>
      </Scroll>
    </Viewport>
    <IeStatus>
      <StatusCell $w={265} $pl={1}>
        <WarningIcon />
        <Label $ml={4} $ls={-0.13}>Done, but with errors on page.</Label>
      </StatusCell>
      {[0, 1, 2, 3, 4, 5].map(i => <StatusCell key={i} $w={22} />)}
      <StatusCell $w={250}>
        <GlobeIcon />
        <Label $ml={4} $ls={0.02}>Internet | Protected Mode: On</Label>
      </StatusCell>
      <StatusCell $w={35} $pl={3}>
        <ShieldLock />
        <Spacer $w={4} />
        <Caret />
      </StatusCell>
      <StatusCell $w={91} $pl={5}>
        <ZoomIcon />
        <Label $ml={1}>100%</Label>
        <Spacer $w={15} />
        <Caret />
        <Spacer />
        <GripIcon />
      </StatusCell>
    </IeStatus>
  </IeWindow>
)

const App = () => (
  <Desktop>
    <GlobalStyle />
    <Outlook />
    <Taskbar>
      <StartButton>
        <WindowsFlag />
        <Label $bold $ls={0}>Start</Label>
      </StartButton>
      <TaskButton $kind="active" $ml={9}><IeIcon size={17} /></TaskButton>
      <TaskButton $ml={2}><ExplorerIcon /></TaskButton>
      <TaskButton $ml={2}><MediaIcon /></TaskButton>
      <TaskButton $ml={2}><ChromeIcon /></TaskButton>
      <TaskButton $ml={2}><OperaIcon /></TaskButton>
      <TaskButton $kind="raised" $ml={2}><ZLogo /></TaskButton>
      <TaskButton $kind="raised" $ml={2}><OutlookIcon /></TaskButton>
      <Spacer />
      <Tray>
        <svg width="7" height="9" viewBox="0 0 7 9"><path d="M.5 4l3-3 3 3M.5 8l3-3 3 3" fill="none" stroke="#000" strokeWidth="1.300" /></svg>
        <Spacer $w={10} />
        <OutlookIcon />
        <Spacer $w={14} />
        <NetworkIcon />
        <Spacer $w={8} />
        <SpeakerIcon />
        <Spacer $w={8} />
        <FlagIcon />
        <Spacer $w={16} />
        <Label>2:57 AM</Label>
        <Spacer />
        <DesktopIcon />
      </Tray>
    </Taskbar>
    <InternetExplorer />
    <Watermark width="250" height="75" viewBox="0 0 250 75">
      <defs>
        <linearGradient id="markFill" gradientUnits="userSpaceOnUse" x1="0" y1="40" x2="0" y2="44">
          <stop offset="0" stopColor="#fff" />
          <stop offset="1" stopColor="#efefef" />
        </linearGradient>
      </defs>
      <g fill="url(#markFill)" fontFamily="Roboto, sans-serif" fontSize="51">
        <text x="8" y="59" textLength="64" lengthAdjust="spacingAndGlyphs">ANY</text>
        <text x="137" y="59" textLength="66" lengthAdjust="spacingAndGlyphs">RUN</text>
      </g>
      <g fill="none" strokeWidth="4.500" strokeLinejoin="round">
        <path d="M82 61V20l5-3" stroke="#fff" />
        <path d="M132 38L84 68v-7" stroke="#ededed" />
        <path d="M92 56V12l40 26" stroke="#fff" />
        <path d="M98 52V29l18 11z" stroke="#f4f4f4" strokeWidth="2" />
      </g>
    </Watermark>
  </Desktop>
)

export default App
